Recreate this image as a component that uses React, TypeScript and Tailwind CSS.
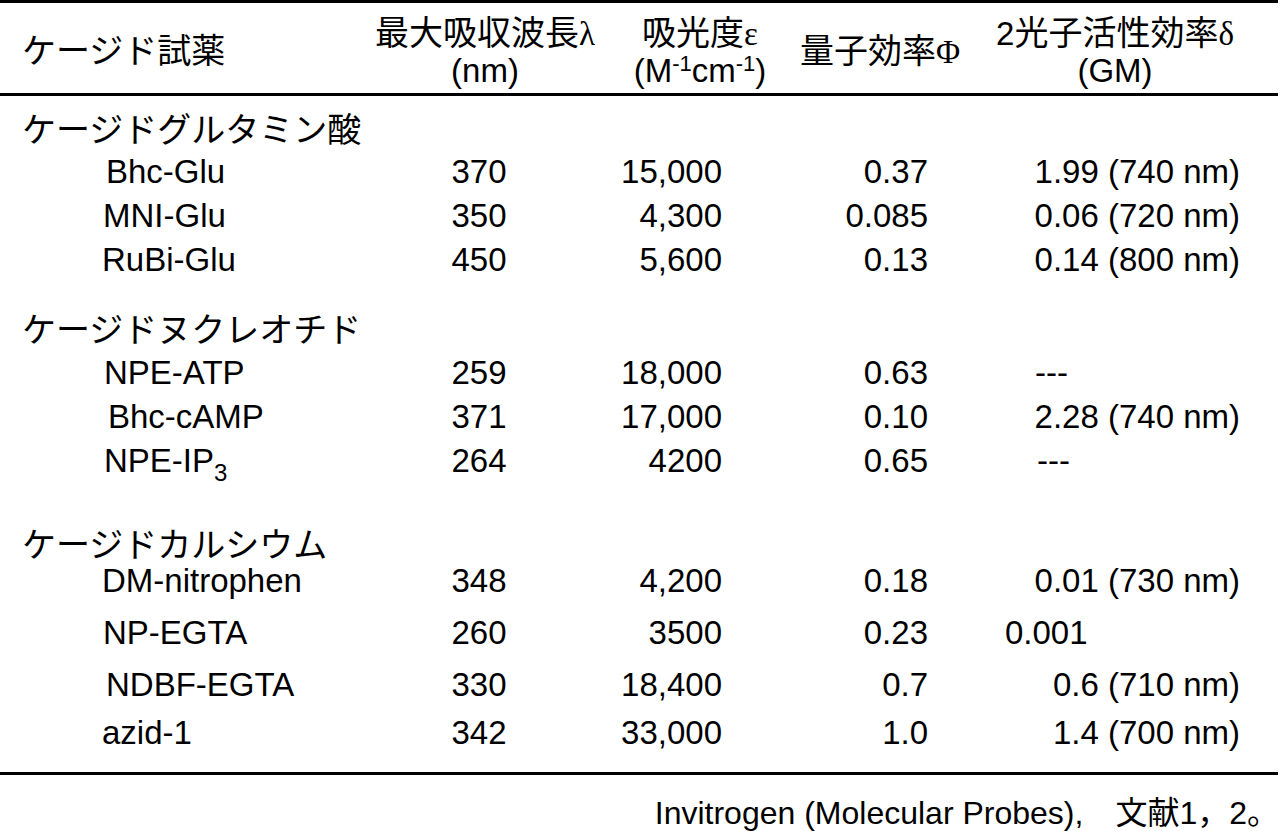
import React from "react";

type Row = {
  name: React.ReactNode;
  pad: string;
  lambda: string;
  eps: string;
  phi: string;
  delta: string;
  deltaPad?: string;
  mt: string;
};

type Group = { title: string; mt: string; rows: Row[] };

const groups: Group[] = [
  {
    title: "ケージドグルタミン酸",
    mt: "mt-[17px]",
    rows: [
      { name: "Bhc-Glu", pad: "pl-[106px]", lambda: "370", eps: "15,000", phi: "0.37", delta: "1.99 (740 nm)", mt: "mt-[7px]" },
      { name: "MNI-Glu", pad: "pl-[103px]", lambda: "350", eps: "4,300", phi: "0.085", delta: "0.06 (720 nm)", mt: "mt-[10px]" },
      { name: "RuBi-Glu", pad: "pl-[102px]", lambda: "450", eps: "5,600", phi: "0.13", delta: "0.14 (800 nm)", mt: "mt-[10px]" },
    ],
  },
  {
    title: "ケージドヌクレオチド",
    mt: "mt-[37px]",
    rows: [
      { name: "NPE-ATP", pad: "pl-[104px]", lambda: "259", eps: "18,000", phi: "0.63", delta: "---", deltaPad: "pl-[107px]", mt: "mt-[8px]" },
      { name: "Bhc-cAMP", pad: "pl-[108px]", lambda: "371", eps: "17,000", phi: "0.10", delta: "2.28 (740 nm)", mt: "mt-[10px]" },
      {
        name: (
          <>
            NPE-IP<sub className="text-[24px] relative top-[9px] align-baseline">3</sub>
          </>
        ),
        pad: "pl-[104px]",
        lambda: "264",
        eps: "4200",
        phi: "0.65",
        delta: "---",
        deltaPad: "pl-[109px]",
        mt: "mt-[10px]",
      },
    ],
  },
  {
    title: "ケージドカルシウム",
    mt: "mt-[51px]",
    rows: [
      { name: "DM-nitrophen", pad: "pl-[102px]", lambda: "348", eps: "4,200", phi: "0.18", delta: "0.01 (730 nm)", mt: "mt-[1px]" },
      { name: "NP-EGTA", pad: "pl-[103px]", lambda: "260", eps: "3500", phi: "0.23", delta: "0.001", deltaPad: "pl-[77px]", mt: "mt-[18px]" },
      { name: "NDBF-EGTA", pad: "pl-[106px]", lambda: "330", eps: "18,400", phi: "0.7", delta: "0.6 (710 nm)", mt: "mt-[18px]" },
      { name: "azid-1", pad: "pl-[102px]", lambda: "342", eps: "33,000", phi: "1.0", delta: "1.4 (700 nm)", mt: "mt-[14px]" },
    ],
  },
];

const greek = "font-['Liberation_Serif',serif]";
const jp = "text-[34px]";
const sup = "text-[22px] relative -top-[11px] align-baseline";

function DataRow({ row }: { row: Row }) {
  return (
    <div className={`flex h-[34px] items-center text-[33px] ${row.mt}`}>
      <div className={`w-[370px] ${row.pad}`}>{row.name}</div>
      <div className="w-[218px] text-center">{row.lambda}</div>
      <div className="w-[134px] text-right">{row.eps}</div>
      <div className="w-[206px] text-right">{row.phi}</div>
      {row.deltaPad ? (
        <div className={`w-[312px] text-left ${row.deltaPad}`}>{row.delta}</div>
      ) : (
        <div className="w-[312px] text-right">{row.delta}</div>
      )}
    </div>
  );
}

export default function App() {
  return (
    <div className="w-[1281px] h-[831px] bg-white text-black text-[33px] leading-none font-['Liberation_Sans','Noto_Sans_CJK_JP',sans-serif] overflow-hidden">
      {/* top rule */}
      <div className="h-[3px] w-[1278px] bg-black" />

      {/* column headings */}
      <div className="flex h-[90px] items-center pt-[6px]">
        <div className={`w-[360px] pl-[22px] ${jp}`}>ケージド試薬</div>
        <div className="w-[250px] flex flex-col items-center gap-[3px]">
          <span>
            <span className={jp}>最大吸収波長</span>
            <span className={greek}>λ</span>
          </span>
          <span>(nm)</span>
        </div>
        <div className="w-[180px] flex flex-col items-center gap-[3px]">
          <span>
            <span className={jp}>吸光度</span>
            <span className={greek}>ε</span>
          </span>
          <span>
            (M<sup className={sup}>-1</sup>cm<sup className={sup}>-1</sup>)
          </span>
        </div>
        <div className="w-[180px] flex justify-center">
          <span>
            <span className={jp}>量子効率</span>
            <span className={greek}>Φ</span>
          </span>
        </div>
        <div className="w-[290px] flex flex-col items-center gap-[3px]">
          <span>
            2<span className={jp}>光子活性効率</span>
            <span className={greek}>δ</span>
          </span>
          <span>(GM)</span>
        </div>
      </div>

      <div className="h-[3px] w-[1278px] bg-black" />

      {/* body */}
      {groups.map((g) => (
        <div key={g.title}>
          <div className={`flex h-[34px] items-center pl-[22px] ${jp} ${g.mt}`}>{g.title}</div>
          {g.rows.map((r, i) => (
            <DataRow key={i} row={r} />
          ))}
        </div>
      ))}

      <div className="mt-[23px] h-[3px] w-[1278px] bg-black" />

      {/* source note */}
      <div className="mt-[21px] flex h-[34px] items-center justify-end pr-[2px] text-[32px]">
        Invitrogen (Molecular Probes),　文献1，2。
      </div>
    </div>
  );
}
